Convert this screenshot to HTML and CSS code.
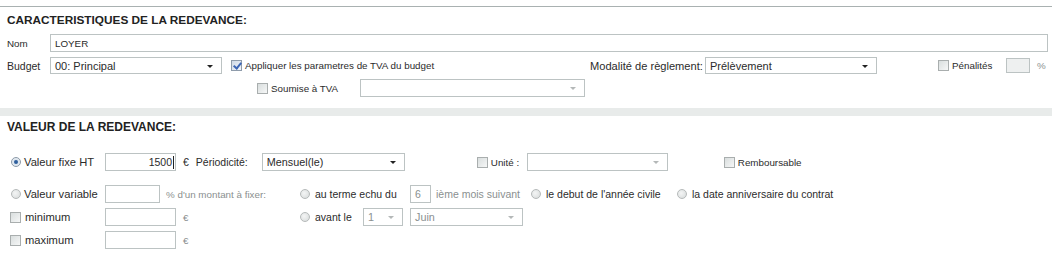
FILE: index.html
```html
<!DOCTYPE html>
<html lang="fr">
<head>
    <meta charset="UTF-8">
    <title>Redevance</title>
    <link rel="stylesheet" href="styles.css">
</head>
<body>
    <div class="section first">
        <h2 class="title">CARACTERISTIQUES DE LA REDEVANCE:</h2>

        <div class="row row-nom">
            <span class="lbl small w43">Nom</span>
            <div class="input grow small">LOYER</div>
        </div>

        <div class="row row-budget">
            <span class="lbl w43">Budget</span>
            <div class="select w172">00: Principal<i class="arrow"></i></div>
            <label class="check small w359"><span class="cb checked"></span>Appliquer les parametres de TVA du budget</label>
            <span class="lbl big w115">Modalité de règlement:</span>
            <div class="select w172">Prélèvement<i class="arrow"></i></div>
            <label class="check small w68 push61"><span class="cb"></span>Pénalités</label>
            <div class="input w24 grey"></div>
            <span class="unit small hint">%</span>
        </div>

        <div class="row row-tva">
            <label class="check small w103"><span class="cb"></span>Soumise à TVA</label>
            <div class="select w225 off"><i class="arrow light"></i></div>
        </div>
    </div>

    <div class="band"></div>

    <div class="section">
        <h2 class="title title2">VALEUR DE LA REDEVANCE:</h2>

        <div class="row row-a">
            <label class="check first-col w98"><span class="radio on"></span>Valeur fixe HT</label>
            <div class="input w71 right">1500<span class="caret"></span></div>
            <span class="unit">€</span>
            <span class="lbl w66">Périodicité:</span>
            <div class="select w143">Mensuel(le)<i class="arrow"></i></div>
            <label class="check small w50 push72"><span class="cb"></span>Unité :</label>
            <div class="select w141 off"><i class="arrow light"></i></div>
            <label class="check small push56"><span class="cb"></span>Remboursable</label>
        </div>

        <div class="row row-b">
            <label class="check first-col w98"><span class="radio"></span>Valeur variable</label>
            <div class="input w55"></div>
            <span class="hint small w134">% d'un montant à fixer:</span>
            <label class="check w110"><span class="radio"></span>au terme echu du</label>
            <div class="input w21 dim">6</div>
            <span class="hint w95">ième mois suivant</span>
            <label class="check w146"><span class="radio"></span>le debut de l'année civile</label>
            <label class="check"><span class="radio"></span>la date anniversaire du contrat</label>
        </div>

        <div class="row row-c">
            <label class="check first-col w98"><span class="cb"></span>minimum</label>
            <div class="input w71"></div>
            <span class="unit hint small w117">€</span>
            <label class="check w63"><span class="radio"></span>avant le</label>
            <div class="select w40 off dim">1<i class="arrow light"></i></div>
            <div class="select w113 off dim gap7">Juin<i class="arrow light"></i></div>
        </div>

        <div class="row row-c">
            <label class="check first-col w98"><span class="cb"></span>maximum</label>
            <div class="input w71"></div>
            <span class="unit hint small">€</span>
        </div>
    </div>
</body>
</html>
```

FILE: styles.css
```css
body {
    margin: 0;
    padding: 6px 0 0 0;
    font-family: 'Liberation Sans', Arial, sans-serif;
    font-size: 10.5px;
    color: #2b2b2b;
    background: #fff;
}
.section {
    padding: 0 4px 0 7px;
}
.section.first {
    border-top: 1px solid #a9b1b1;
}
.title {
    margin: 0;
    height: 26px;
    line-height: 26px;
    font-size: 11.8px;
    font-weight: bold;
    color: #222;
}
.title2 {
    height: 22px;
    line-height: 22px;
    font-size: 12px;
}
.band {
    margin-top: 11px;
    height: 8px;
    background: #e8ebea;
}
.row {
    display: flex;
    align-items: center;
    height: 18px;
}
.row-nom { margin-top: 1px; }
.row-budget { margin-top: 5px; height: 17px; }
.row-tva { margin-top: 5px; padding-left: 250px; }
.row-a { margin-top: 15px; }
.row-b { margin-top: 14px; }
.row-c { margin-top: 5px; }

.small { font-size: 9.8px; }
.big { font-size: 11.1px; }
.lbl { white-space: nowrap; }
.hint { color: #8a8f8f; }
.unit { margin-left: 7px; }
.first-col { font-size: 11.2px; }

.w21 { width: 21px; }
.w24 { width: 24px; }
.w40 { width: 40px; }
.w43 { width: 43px; flex: none; }
.w50 { width: 50px; }
.w55 { width: 55px; }
.w63 { width: 63px; }
.w66 { width: 66px; flex: none; margin-left: 7px; }
.w68 { width: 68px; }
.w71 { width: 71px; }
.w95 { width: 95px; margin-left: 5px; }
.w98 { width: 98px; }
.w103 { width: 103px; }
.w110 { width: 110px; }
.w113 { width: 113px; }
.w115 { width: 115px; flex: none; overflow: hidden; }
.w117 { width: 117px; flex: none; }
.w134 { width: 134px; margin-left: 6px; }
.w141 { width: 141px; }
.w143 { width: 143px; }
.w146 { width: 146px; }
.w172 { width: 172px; }
.w225 { width: 225px; }
.w359 { width: 359px; margin-left: 9px; }
.push56 { margin-left: 56px; }
.push61 { margin-left: 61px; }
.push72 { margin-left: 72px; }
.gap7 { margin-left: 7px; }
.grow { flex: 1; }

.input, .select {
    box-sizing: border-box;
    height: 100%;
    border: 1px solid #bcc3c3;
    background: #fff;
    padding: 0 4px;
    display: flex;
    align-items: center;
    flex: none;
    position: relative;
    white-space: nowrap;
}
.input.grow { flex: 1; }
.input.right { justify-content: flex-end; padding-right: 1px; }
.input.grey { background: #eef0f0; height: 15px; }
.dim { color: #8a8f8f; }
.select { font-size: 11px; }
.row-a .select, .row-c .select { font-size: 10.8px; }
.caret {
    display: inline-block;
    width: 1px;
    height: 13px;
    background: #222;
    margin-left: 1px;
}
.arrow {
    position: absolute;
    right: 8px;
    top: 50%;
    margin-top: -1px;
    border-left: 3px solid transparent;
    border-right: 3px solid transparent;
    border-top: 3px solid #222;
}
.arrow.light { border-top-color: #b4b8b8; }

.check {
    display: flex;
    align-items: center;
    white-space: nowrap;
    flex: none;
}
.cb {
    box-sizing: border-box;
    width: 11px;
    height: 11px;
    margin-right: 3px;
    border: 1px solid #a9aeae;
    background: linear-gradient(135deg, #d9dede, #f6f7f7);
    flex: none;
    position: relative;
}
.row-c .cb { margin-left: 3px; margin-right: 4px; }
.cb.checked {
    background: linear-gradient(135deg, #cfd9e6, #f2f5f9);
    border-color: #8f9cab;
}
.cb.checked::after {
    content: "";
    position: absolute;
    left: 3px;
    top: 0px;
    width: 3px;
    height: 6px;
    border-right: 2px solid #3d66b5;
    border-bottom: 2px solid #3d66b5;
    transform: rotate(40deg);
}
.radio {
    box-sizing: border-box;
    width: 10px;
    height: 10px;
    margin: 0 5px 0 0;
    border-radius: 50%;
    border: 1px solid #b6baba;
    background: radial-gradient(circle at 40% 40%, #f4f5f5, #d6dada);
    flex: none;
    position: relative;
}
.first-col .radio { margin: 0 3px 0 4px; }
.radio.on {
    border-color: #8c9aa8;
    background: radial-gradient(circle, #cfdbe8, #eef2f6);
}
.radio.on::after {
    content: "";
    position: absolute;
    left: 2px;
    top: 2px;
    width: 4px;
    height: 4px;
    border-radius: 50%;
    background: #2f5f9e;
}
```
